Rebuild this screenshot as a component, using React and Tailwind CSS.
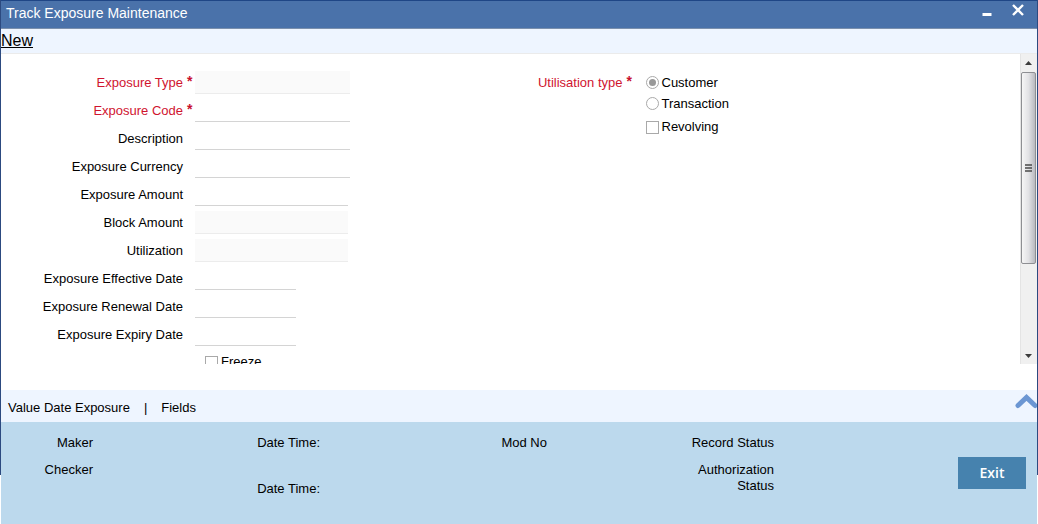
import React, { useState } from "react";

const fields = [
	{ id: "exposureType", label: "Exposure Type", required: true, readOnly: true, size: "w-[155px]" },
	{ id: "exposureCode", label: "Exposure Code", required: true, size: "w-[155px]" },
	{ id: "description", label: "Description", size: "w-[155px]" },
	{ id: "exposureCurrency", label: "Exposure Currency", size: "w-[155px]" },
	{ id: "exposureAmount", label: "Exposure Amount", size: "w-[153px]" },
	{ id: "blockAmount", label: "Block Amount", readOnly: true, size: "w-[153px]" },
	{ id: "utilization", label: "Utilization", readOnly: true, size: "w-[153px]" },
	{ id: "effectiveDate", label: "Exposure Effective Date", size: "w-[101px]" },
	{ id: "renewalDate", label: "Exposure Renewal Date", size: "w-[101px]" },
	{ id: "expiryDate", label: "Exposure Expiry Date", size: "w-[101px]" },
];

const audit = [
	["Maker", "Checker"],
	["Date Time:", "Date Time:"],
	["Mod No"],
	["Record Status", "Authorization Status"],
];

function Star({ show }) {
	return (
		<span className="w-3 shrink-0 pl-1 text-sm leading-5 font-bold text-[#c8102e]">
			{show ? "*" : ""}
		</span>
	);
}

function Field({ field }) {
	return (
		<div className="flex h-7 items-start">
			<label
				htmlFor={field.id}
				className={`w-[182px] shrink-0 text-right leading-6 ${
					field.required ? "text-[#d0142f]" : ""
				}`}
			>
				{field.label}
			</label>
			<Star show={field.required} />
			<input
				id={field.id}
				type="text"
				readOnly={field.readOnly}
				className={`h-[23px] px-1 outline-none border-b ${field.size} ${
					field.readOnly
						? "bg-[#fafafa] border-[#ececec]"
						: "bg-white border-[#d4d4d4]"
				}`}
			/>
		</div>
	);
}

function Check({ id, label }) {
	return (
		<div className="flex items-center gap-[3px] leading-5">
			<input
				id={id}
				type="checkbox"
				className="size-[13px] appearance-none border border-[#a9a9a9] bg-white checked:bg-[#999999]"
			/>
			<label htmlFor={id}>{label}</label>
		</div>
	);
}

function Scrollbar() {
	return (
		<div className="flex w-[17px] shrink-0 flex-col border-l border-[#e4e4e4] bg-[#f0f0f0] pr-px">
			<svg className="h-[18px] w-full shrink-0" viewBox="0 0 15 18">
				<path d="M4 11 L7.500 7 L11 11 Z" fill="#3c3c3c" />
			</svg>
			<div className="flex h-[192px] items-center justify-center rounded-xs border border-[#8e8f93] bg-linear-to-r from-[#f6f6f6] via-[#e2e2e5] to-[#b9bac0]">
				<svg width="7" height="8" viewBox="0 0 7 8">
					<path d="M0 1h7M0 4h7M0 7h7" stroke="#4a4a4a" strokeWidth="1.500" />
				</svg>
			</div>
			<div className="flex-1" />
			<svg className="h-[18px] w-full shrink-0" viewBox="0 0 15 18">
				<path d="M4 8 L11 8 L7.500 12 Z" fill="#3c3c3c" />
			</svg>
		</div>
	);
}

export default function App() {
	const [type, setType] = useState("customer");

	return (
		<div className="pb-[49px] font-['Liberation_Sans',Arial,sans-serif] text-[13px] text-black">
			<div className="flow-root border-x border-[#2c4a80] bg-white">
				<header className="flex h-[29px] items-start justify-between border-t border-b border-t-[#1f4686] border-b-[#7b90ad] bg-[#4a72aa] pt-[2px] pl-[5px] text-white">
					<h1 className="text-sm leading-5">Track Exposure Maintenance</h1>
					<div className="flex items-start gap-5 pt-px pr-[13px]">
						<button aria-label="Minimize">
							<svg width="10" height="12" viewBox="0 0 10 12">
								<path d="M0.500 10.500h9" stroke="#ffffff" strokeWidth="3" />
							</svg>
						</button>
						<button aria-label="Close">
							<svg width="12" height="12" viewBox="0 0 12 12">
								<path d="M1 1L11 11M11 1L1 11" stroke="#ffffff" strokeWidth="2.400" />
							</svg>
						</button>
					</div>
				</header>

				<nav className="h-[25px] border-b border-[#ebebeb] bg-[#eef5ff]">
					<a href="#new" className="block w-fit text-base leading-6 underline">
						New
					</a>
				</nav>

				<main className="flex max-h-[310px]">
					<div className="grid flex-1 grid-cols-2 overflow-y-auto pt-[17px] [scrollbar-width:none]">
						<div>
							{fields.map((field) => (
								<Field key={field.id} field={field} />
							))}
							<div className="pt-px pl-[204px]">
								<Check id="freeze" label="Freeze" />
							</div>
						</div>
						<div
							role="group"
							aria-labelledby="utilisationType"
							className="flex items-start"
						>
							<span
								id="utilisationType"
								className="w-28 shrink-0 text-right leading-6 text-[#d0142f]"
							>
								Utilisation type
							</span>
							<Star show />
							<div className="pt-px pl-[11px]">
								{["Customer", "Transaction"].map((name) => (
									<div key={name} className="flex h-[21px] items-center gap-[3px]">
										<input
											id={name}
											type="radio"
											name="utilisation"
											checked={type === name.toLowerCase()}
											onChange={() => setType(name.toLowerCase())}
											className="size-[13px] appearance-none rounded-full border border-[#a9a9a9] bg-white bg-clip-content p-0.5 checked:bg-[#999999]"
										/>
										<label htmlFor={name}>{name}</label>
									</div>
								))}
								<div className="pt-[3px]">
									<Check id="revolving" label="Revolving" />
								</div>
							</div>
						</div>
					</div>
					<Scrollbar />
				</main>

				<nav className="mt-[26px] flex h-8 items-start justify-between overflow-hidden bg-[#eef5ff] pt-1 pl-[7px]">
					<div className="flex gap-[14px] pt-1 leading-5">
						<a href="#value-date">Value Date Exposure</a>
						<span>|</span>
						<a href="#fields">Fields</a>
					</div>
					<button aria-label="Expand">
						<svg width="22" height="15" viewBox="0 0 22 15">
							<path
								d="M3 11.500 L11.500 3.500 L20 11.500"
								fill="none"
								stroke="#6b96d3"
								strokeWidth="5"
								strokeLinecap="round"
							/>
						</svg>
					</button>
				</nav>

				{/* the audit strip hangs below the window frame */}
				<footer className="-mb-[49px] flex bg-[#bcd9ed] pb-[27px]">
					<div className="grid flex-1 grid-cols-4 pt-[13px] leading-4">
						{audit.map((column, i) => (
							<div key={i} className="flex w-[92px] flex-col gap-[11px] text-right">
								{column.map((name, j) => (
									<span key={j} className={i === 1 && j === 1 ? "pt-[19px]" : ""}>
										{name}
									</span>
								))}
							</div>
						))}
					</div>
					<div className="w-32 shrink-0 pt-[35px] pr-[11px] text-right">
						<button className="h-8 w-[68px] bg-[#4682ae] font-['Open_Sans',sans-serif] text-sm font-semibold text-white">
							Exit
						</button>
					</div>
				</footer>
			</div>
		</div>
	);
}
